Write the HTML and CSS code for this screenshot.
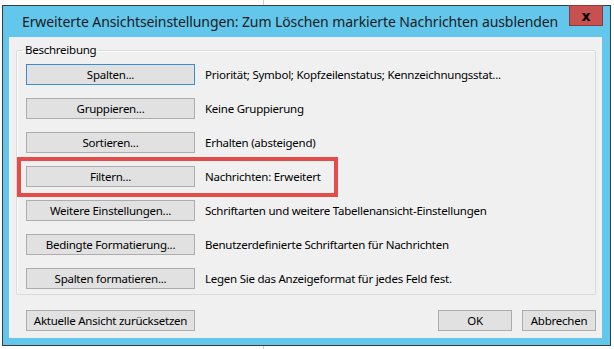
FILE: index.html
```html
<!DOCTYPE html>
<html lang="de">
<head>
    <meta charset="UTF-8">
    <meta name="viewport" content="width=device-width, initial-scale=1.0">
    <title>Erweiterte Ansichtseinstellungen</title>
    <link rel="stylesheet" href="styles.css">
</head>
<body>
    <div class="window">
        <div class="titlebar">
            <span class="title">Erweiterte Ansichtseinstellungen: Zum Löschen markierte Nachrichten ausblenden</span>
            <button class="close">x</button>
        </div>

        <div class="client">
            <fieldset class="group">
                <legend>Beschreibung</legend>

                <div class="row">
                    <button class="btn btn-wide focused">Spalten...</button>
                    <span class="desc">Priorität; Symbol; Kopfzeilenstatus; Kennzeichnungsstat...</span>
                </div>
                <div class="row">
                    <button class="btn btn-wide">Gruppieren...</button>
                    <span class="desc">Keine Gruppierung</span>
                </div>
                <div class="row">
                    <button class="btn btn-wide">Sortieren...</button>
                    <span class="desc">Erhalten (absteigend)</span>
                </div>
                <div class="row marked">
                    <button class="btn btn-wide">Filtern...</button>
                    <span class="desc">Nachrichten: Erweitert</span>
                </div>
                <div class="row">
                    <button class="btn btn-wide">Weitere Einstellungen...</button>
                    <span class="desc">Schriftarten und weitere Tabellenansicht-Einstellungen</span>
                </div>
                <div class="row">
                    <button class="btn btn-wide">Bedingte Formatierung...</button>
                    <span class="desc">Benutzerdefinierte Schriftarten für Nachrichten</span>
                </div>
                <div class="row">
                    <button class="btn btn-wide">Spalten formatieren...</button>
                    <span class="desc">Legen Sie das Anzeigeformat für jedes Feld fest.</span>
                </div>
            </fieldset>

            <div class="footer">
                <button class="btn btn-wide">Aktuelle Ansicht zurücksetzen</button>
                <div class="footer-right">
                    <button class="btn btn-small">OK</button>
                    <button class="btn btn-small">Abbrechen</button>
                </div>
            </div>
        </div>
    </div>
</body>
</html>
```

FILE: styles.css
```css
body {
    margin: 0;
    background: #fff linear-gradient(to right, transparent 263px, #cfcfcf 263px, #cfcfcf 264px, transparent 264px);
    font-family: "Noto Sans", sans-serif;
    font-size: 11.5px;
    letter-spacing: -0.25px;
    color: #000;
}
.window {
    box-sizing: border-box;
    width: 609px;
    height: 341px;
    margin: 5px 0 0 2px;
    border: 1px solid #3b3b3b;
    background-color: #62c7eb;
    display: flex;
    flex-direction: column;
}
.titlebar {
    height: 31px;
    display: flex;
    align-items: center;
    padding-left: 19px;
    padding-right: 7px;
}
.title {
    flex: 1;
    min-width: 0;
    overflow: hidden;
    font-size: 14px;
    letter-spacing: -0.1px;
    color: #1b1b1b;
    white-space: nowrap;
}
.close {
    flex: none;
    align-self: flex-start;
    box-sizing: border-box;
    width: 34px;
    height: 21px;
    margin-top: -1px;
    padding: 0;
    border: 1px solid #8c3a3a;
    background-color: #c75050;
    color: #000;
    font-family: "DejaVu Sans", sans-serif;
    font-size: 14px;
    font-weight: bold;
    line-height: 16px;
}
.client {
    box-sizing: border-box;
    height: 301px;
    margin: 0 8px 0 6px;
    padding: 5px 6px 7px 7px;
    background-color: #f0f0f0;
    display: flex;
    flex-direction: column;
}
.group {
    margin: 0;
    padding: 6px 9px 5px 9px;
    border: 1px solid #dadada;
    border-radius: 2px;
    box-shadow: inset 1px 1px 0 #fff;
    display: flex;
    flex-direction: column;
    gap: 13px;
}
.group legend {
    margin-left: -3px;
    padding: 0 2px;
    line-height: 16px;
}
.row {
    position: relative;
    display: flex;
    align-items: center;
    gap: 10px;
}
.marked::before {
    content: "";
    position: absolute;
    left: -9px;
    top: -9px;
    box-sizing: border-box;
    width: 321px;
    height: 40px;
    border: 4px solid #e34c48;
}
.btn {
    box-sizing: border-box;
    height: 21px;
    padding: 0;
    border: 1px solid #adadad;
    background-color: #e1e1e1;
    font-family: inherit;
    font-size: inherit;
    letter-spacing: inherit;
    color: #000;
    line-height: 17px;
    white-space: nowrap;
}
.btn-wide {
    width: 169px;
}
.btn-small {
    width: 74px;
}
.focused {
    border-color: #3c8cd4;
}
.desc {
    white-space: nowrap;
}
.footer {
    margin-top: auto;
    display: flex;
    justify-content: space-between;
    padding-left: 10px;
}
.footer-right {
    display: flex;
    gap: 10px;
}
```
